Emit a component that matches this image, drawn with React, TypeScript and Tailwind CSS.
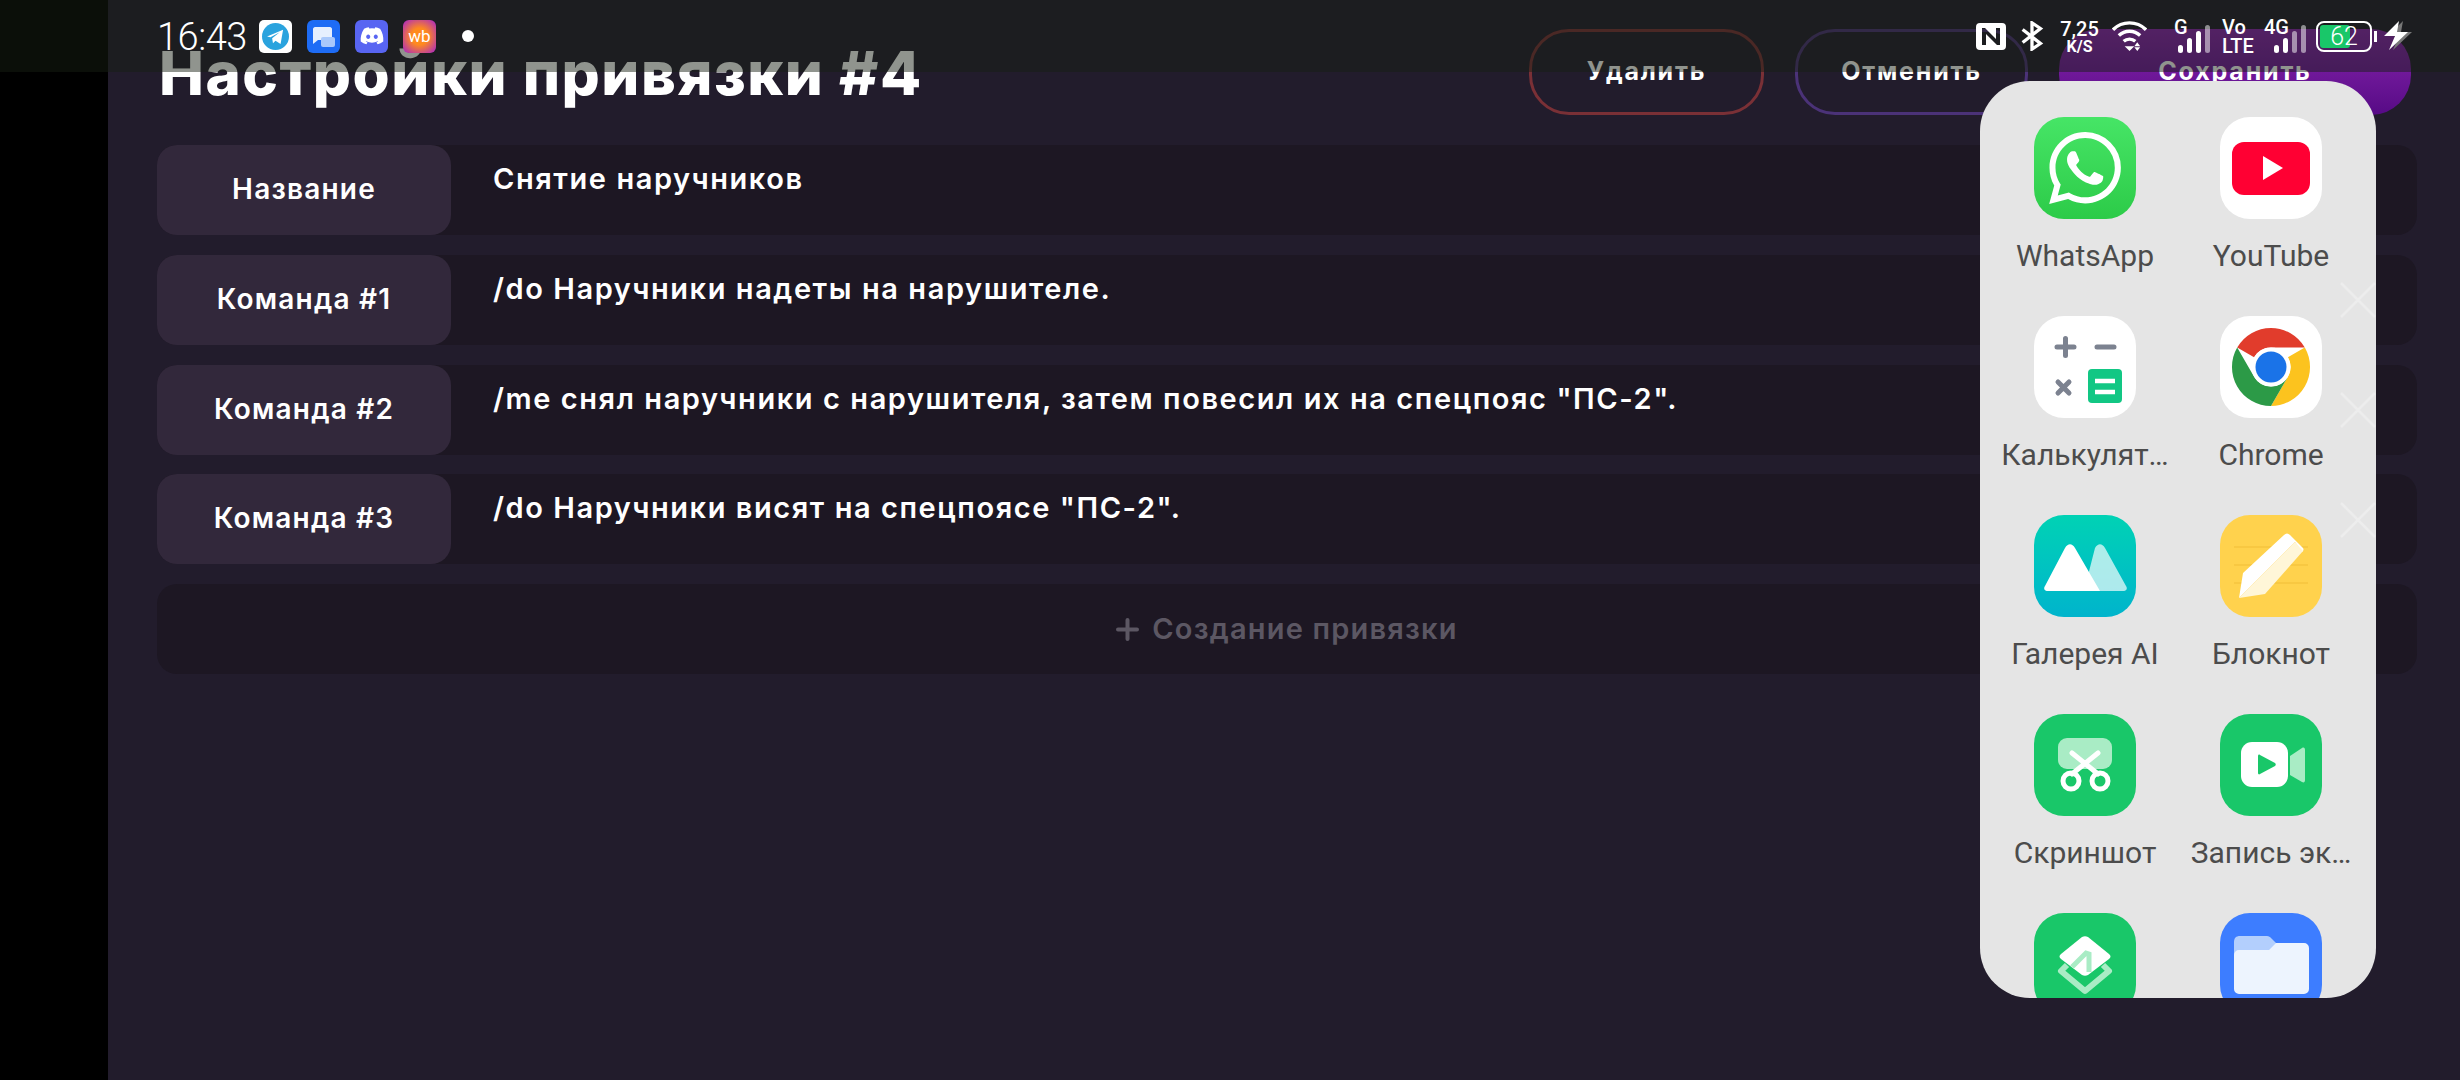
import React from 'react';

const rows = [
  { label: 'Название', value: 'Снятие наручников' },
  { label: 'Команда #1', value: '/do Наручники надеты на нарушителе.' },
  { label: 'Команда #2', value: '/me снял наручники с нарушителя, затем повесил их на спецпояс "ПС-2".' },
  { label: 'Команда #3', value: '/do Наручники висят на спецпоясе "ПС-2".' },
];

const WhatsAppIcon = () => (
  <div className="w-[102px] h-[102px] rounded-[30px] bg-gradient-to-b from-[#46e566] to-[#2ccb48] flex items-center justify-center">
    <svg viewBox="0 0 24 24" className="w-[72px] h-[72px]" fill="#fff">
      <path d="M17.47 14.38c-.3-.15-1.76-.87-2.03-.97-.27-.1-.47-.15-.67.15-.2.3-.77.97-.94 1.16-.17.2-.35.22-.64.08-.3-.15-1.26-.46-2.39-1.48-.88-.79-1.48-1.76-1.65-2.06-.17-.3-.02-.46.13-.6.13-.13.3-.35.45-.52.15-.17.2-.3.3-.5.1-.2.05-.37-.03-.52-.07-.15-.67-1.61-.92-2.2-.24-.58-.49-.5-.67-.51h-.57c-.2 0-.52.07-.79.37-.27.3-1.04 1.02-1.04 2.48s1.07 2.88 1.21 3.07c.15.2 2.1 3.2 5.08 4.49.71.3 1.26.49 1.69.62.71.23 1.36.2 1.87.12.57-.08 1.76-.72 2-1.41.25-.7.25-1.29.18-1.41-.07-.13-.27-.2-.57-.35zM12.05 21.79h-.01a9.87 9.87 0 0 1-5.03-1.38l-.36-.21-3.74.98 1-3.65-.24-.37a9.86 9.86 0 0 1-1.51-5.26c0-5.45 4.44-9.88 9.89-9.88 2.64 0 5.12 1.03 6.99 2.9a9.83 9.83 0 0 1 2.89 6.99c0 5.45-4.44 9.88-9.89 9.88zM20.46 3.49A11.82 11.82 0 0 0 12.05 0C5.5 0 .16 5.34.16 11.89c0 2.1.55 4.14 1.59 5.95L.06 24l6.31-1.65a11.88 11.88 0 0 0 5.68 1.45h.01c6.55 0 11.89-5.34 11.89-11.89a11.82 11.82 0 0 0-3.48-8.41z" />
    </svg>
  </div>
);

const YouTubeIcon = () => (
  <div className="w-[102px] h-[102px] rounded-[30px] bg-white flex items-center justify-center">
    <div className="w-[78px] h-[53px] rounded-[12px] bg-[#ff0033] flex items-center justify-center pl-[3px]">
      <svg viewBox="0 0 20 24" className="w-[20px] h-[24px]" fill="#fff"><path d="M0 0l20 12L0 24z" /></svg>
    </div>
  </div>
);

const CalculatorIcon = () => (
  <div className="w-[102px] h-[102px] rounded-[30px] bg-white">
    <svg viewBox="0 0 102 102" className="w-full h-full">
      <g stroke="#7c8290" strokeWidth="5" strokeLinecap="round">
        <path d="M23 31h17M31.5 22.5v17M63 31h17M24 66l11 11M35 66L24 77" />
      </g>
      <rect x="54" y="53" width="34" height="34" rx="4" fill="#12c784" />
      <path d="M61 65h20M61 76h20" stroke="#fff" strokeWidth="4.5" />
    </svg>
  </div>
);

const ChromeIcon = () => (
  <div className="w-[102px] h-[102px] rounded-[30px] bg-white">
    <svg viewBox="0 0 102 102" className="w-full h-full">
      <path d="M51 12a39 39 0 0 1 33.8 19.5H51A19.5 19.5 0 0 0 34.1 41.3L17.2 31.5A39 39 0 0 1 51 12z" fill="#e13c2c" />
      <path d="M84.8 31.5A39 39 0 0 1 51 90l16.9-29.3a19.5 19.5 0 0 0 0-19.5z" fill="#fcc31e" />
      <path d="M51 90a39 39 0 0 1-33.8-58.5l16.9 29.2A19.5 19.5 0 0 0 67.9 60.7z" fill="#2c9a47" />
      <circle cx="51" cy="51" r="19.5" fill="#fff" />
      <circle cx="51" cy="51" r="15.5" fill="#1a73e8" />
    </svg>
  </div>
);

const GalleryIcon = () => (
  <div className="w-[102px] h-[102px] rounded-[30px] bg-gradient-to-b from-[#00d2b4] to-[#00b4cc]">
    <svg viewBox="0 0 102 102" className="w-full h-full">
      <path d="M61 33c3-5 7-5 10 0l21 38c2 3 0 5-3 5H50z" fill="#fff" fillOpacity="0.68" />
      <path d="M31 33c3-5 7-5 10 0l25 43H14c-3 0-5-2-3-5z" fill="#fff" />
    </svg>
  </div>
);

const NotesIcon = () => (
  <div className="w-[102px] h-[102px] rounded-[30px] bg-[#ffd24d]">
    <svg viewBox="0 0 102 102" className="w-full h-full">
      <path d="M14 32h74M14 50h74M14 68h74" stroke="#f6c53f" strokeWidth="1.5" />
      <path d="M64 20c2-2 4-2 6 0l12 12c2 2 2 3 0 5L75 27 19 83l4-25z" fill="#fff" />
      <path d="M75 27l8 9-38 43-26 4z" fill="#fff6d8" />
    </svg>
  </div>
);

const ScreenshotIcon = () => (
  <div className="w-[102px] h-[102px] rounded-[30px] bg-[#19c769]">
    <svg viewBox="0 0 102 102" className="w-full h-full">
      <rect x="24" y="24" width="54" height="31" rx="9" fill="#a9ecc5" />
      <g stroke="#fff" strokeWidth="5" fill="none" strokeLinecap="round">
        <path d="M38 39l26 21M64 39L38 60" />
        <circle cx="37" cy="67" r="8" />
        <circle cx="66" cy="67" r="8" />
      </g>
    </svg>
  </div>
);

const RecorderIcon = () => (
  <div className="w-[102px] h-[102px] rounded-[30px] bg-[#19c769]">
    <svg viewBox="0 0 102 102" className="w-full h-full">
      <path d="M70 42l12-8c2-1 3 0 3 2v30c0 2-1 3-3 2l-12-7z" fill="#a9ecc5" />
      <rect x="21" y="28" width="47" height="45" rx="11" fill="#fff" />
      <path d="M38 42c0-1 1-2 2-1l15 8c1 1 1 2 0 3l-15 8c-1 1-2 0-2-1z" fill="#19c769" />
    </svg>
  </div>
);

const CleanerIcon = () => (
  <div className="w-[102px] h-[102px] rounded-[30px] bg-[#19c769]">
    <svg viewBox="0 0 102 102" className="w-full h-full">
      <path d="M33 52l-6 6 24 20 24-20-6-6" fill="none" stroke="#a9ecc5" strokeWidth="6" strokeLinejoin="round" />
      <path d="M48 24c2-1 4-1 6 0l21 17c2 2 2 3 0 5L54 62c-2 1-4 1-6 0L27 46c-2-2-2-3 0-5z" fill="#fff" />
      <path d="M38 54l14-14 3 1v18" fill="none" stroke="#a9ecc5" strokeWidth="5" />
    </svg>
  </div>
);

const FilesIcon = () => (
  <div className="w-[102px] h-[102px] rounded-[30px] bg-[#3d7dff]">
    <svg viewBox="0 0 102 102" className="w-full h-full">
      <path d="M14 29c0-4 2-6 6-6h27c2 0 3 1 4 2l5 5v15H14z" fill="#b3cffd" />
      <path d="M19 37h30l7-7h28a5 5 0 0 1 5 5v41a5 5 0 0 1-5 5H19a5 5 0 0 1-5-5V42a5 5 0 0 1 5-5z" fill="#edf4fe" />
    </svg>
  </div>
);

const apps = [
  { name: 'WhatsApp', Icon: WhatsAppIcon },
  { name: 'YouTube', Icon: YouTubeIcon },
  { name: 'Калькулят…', Icon: CalculatorIcon },
  { name: 'Chrome', Icon: ChromeIcon },
  { name: 'Галерея AI', Icon: GalleryIcon },
  { name: 'Блокнот', Icon: NotesIcon },
  { name: 'Скриншот', Icon: ScreenshotIcon },
  { name: 'Запись эк…', Icon: RecorderIcon },
  { name: '', Icon: CleanerIcon },
  { name: '', Icon: FilesIcon },
];

const SignalBars: React.FC<{ lit: number }> = ({ lit }) => (
  <div className="absolute right-0 bottom-0 flex items-end gap-[4px]">
    {[8, 15, 22, 28].map((h, i) => (
      <div
        key={h}
        className={i < lit ? 'w-[5px] bg-white rounded-full' : 'w-[5px] bg-white/50 rounded-full'}
        style={{ height: h }}
      />
    ))}
  </div>
);

const StatusBar = () => (
  <div className="absolute top-0 left-0 right-0 h-[72px] bg-[#162012]/[.48] text-white font-['Roboto',sans-serif]">
    <div className="flex items-center h-full pl-[157px] pr-[48px]">
      <span className="text-[38px] font-light tracking-[-0.5px] w-[102px] leading-none pt-[2px]">16:43</span>
      <div className="flex items-center gap-[15px]">
        <div className="w-[33px] h-[33px] rounded-[5px] bg-white flex items-center justify-center">
          <svg viewBox="0 0 32 32" className="w-[27px] h-[27px]">
            <circle cx="16" cy="16" r="16" fill="#2aa3de" />
            <path d="M6 16l19-8-3 17-6-4-3 3-1-6 9-7-11 6z" fill="#fff" />
          </svg>
        </div>
        <div className="w-[33px] h-[33px] rounded-[6px] bg-[#1e6cf5]">
          <svg viewBox="0 0 33 33" className="w-full h-full">
            <path d="M6 9c0-1 1-2 2-2h15c1 0 2 1 2 2v11H11l-5 4z" fill="#e6effe" />
            <rect x="14" y="17" width="14" height="10" rx="2" fill="#a9c8fb" />
          </svg>
        </div>
        <div className="w-[33px] h-[33px] rounded-[6px] bg-[#5865f2] flex items-center justify-center">
          <svg viewBox="0 0 24 24" className="w-[26px] h-[26px]" fill="#fff">
            <path d="M19.3 5.3A17 17 0 0 0 15 4l-.5 1a15 15 0 0 0-5 0L9 4a17 17 0 0 0-4.3 1.3C2 9.3 1.3 13.2 1.6 17a17 17 0 0 0 5.2 2.7l1.1-1.8-1.7-.8.4-.3a12 12 0 0 0 10.8 0l.4.3-1.7.8 1.1 1.8a17 17 0 0 0 5.2-2.7c.4-4.4-.7-8.2-2.9-11.7zM8.5 14.7c-1 0-1.9-1-1.9-2.1s.8-2.1 1.9-2.1 1.9 1 1.9 2.1-.8 2.1-1.9 2.1zm7 0c-1 0-1.9-1-1.9-2.1s.8-2.1 1.9-2.1 1.9 1 1.9 2.1-.8 2.1-1.9 2.1z" />
          </svg>
        </div>
        <div className="w-[33px] h-[33px] rounded-[6px] bg-[radial-gradient(circle,#ff8a1e_35%,#a621cf_100%)] flex items-center justify-center text-[17px] leading-none">wb</div>
      </div>
      <div className="w-[12px] h-[12px] rounded-full bg-white ml-[26px]" />
      <div className="ml-auto flex items-center">
        <svg viewBox="0 0 30 27" className="w-[30px] h-[27px]">
          <path fillRule="evenodd" d="M4 0h22a4 4 0 0 1 4 4v19a4 4 0 0 1-4 4H4a4 4 0 0 1-4-4V4a4 4 0 0 1 4-4zm2 5v17h4V11l11 11h3V5h-4v11L9 5z" fill="#fff" />
        </svg>
        <svg viewBox="0 0 24 32" className="w-[24px] h-[30px] ml-[14px]" fill="none" stroke="#fff" strokeWidth="3.5">
          <path d="M2 9l19 15-9 6V2l9 6L2 23" />
        </svg>
        <div className="ml-[17px] flex flex-col items-center w-[37px] pt-[1px]">
          <span className="text-[20px] leading-[20px] font-medium">7,25</span>
          <span className="text-[16px] leading-[16px] font-bold">K/S</span>
        </div>
        <svg viewBox="0 0 36 32" className="w-[35px] h-[31px] ml-[14px]" fill="none" stroke="#fff" strokeWidth="3.5">
          <path d="M1 9a24 24 0 0 1 34 0M7 15a16 16 0 0 1 22 0M12 21a9 9 0 0 1 12 0" />
          <path d="M13 26h10l-5 5zM26 22l-3 4h6zM23 27h6l-3 4z" fill="#fff" stroke="none" />
        </svg>
        <div className="ml-[27px] relative w-[36px] h-[34px]">
          <span className="absolute left-0 top-[-2px] text-[20px] leading-none font-medium">G</span>
          <SignalBars lit={3} />
        </div>
        <div className="ml-[12px] flex flex-col items-start w-[29px] pt-[1px]">
          <span className="text-[20px] leading-[19px] font-medium">Vo</span>
          <span className="text-[20px] leading-[19px] font-medium">LTE</span>
        </div>
        <div className="ml-[13px] relative w-[42px] h-[34px]">
          <span className="absolute left-0 top-[-2px] text-[20px] leading-none font-medium">4G</span>
          <SignalBars lit={2} />
        </div>
        <div className="ml-[10px] relative w-[56px] h-[31px] rounded-[8px] border-2 border-white p-[2px]">
          <div className="h-full w-[30px] rounded-[3px] bg-[#19c769]" />
          <span className="absolute inset-0 flex items-center justify-center text-[25px] font-light leading-none">62</span>
        </div>
        <div className="w-[3px] h-[11px] bg-white ml-[2px]" />
        <svg viewBox="0 0 28 30" className="w-[28px] h-[30px] ml-[7px]">
          <path d="M19 0L4 15h11L9 29l19-18H17z" fill="#777" />
          <path d="M15 0L0 15h11L5 29l19-18H13z" fill="#fff" />
        </svg>
      </div>
    </div>
  </div>
);

const closeMarks = ['top-[201px]', 'top-[311px]', 'top-[421px]'];

const AppPanel = () => (
  <div className="absolute left-[1980px] top-[81px] w-[396px] h-[917px] rounded-[50px] bg-[#e5e5e5] overflow-hidden">
    <div className="grid grid-cols-[186px_186px] justify-center pt-[36px] font-['Roboto',sans-serif]">
      {apps.map(({ name, Icon }, i) => (
        <div key={i} className="flex flex-col items-center h-[199px]">
          <Icon />
          <span className="mt-[17px] text-[30px] leading-[40px] text-[#4c4c4c] whitespace-nowrap">{name}</span>
        </div>
      ))}
    </div>
    {closeMarks.map(top => (
      <svg key={top} viewBox="0 0 36 36" className={`absolute left-[360px] w-[36px] h-[36px] ${top}`} stroke="#fff" strokeOpacity="0.3" strokeWidth="2.5">
        <path d="M1 1l34 34M35 1L1 35" />
      </svg>
    ))}
  </div>
);

const Row: React.FC<{ label: string; value: string }> = ({ label, value }) => (
  <div className="h-[90px] rounded-[20px] bg-[#1d1723] flex">
    <div className="w-[294px] h-full rounded-[20px] bg-[#32283b] flex items-center justify-center pb-[2px] text-[28px] font-semibold text-white tracking-[1.2px]">
      {label}
    </div>
    <div className="pl-[42px] pt-[12px] text-[29px] font-semibold text-white tracking-[1.56px]">{value}</div>
  </div>
);

export default function App() {
  return (
    <div className="relative w-[2460px] h-[1080px] overflow-hidden bg-[#221c2c] flex font-['Inter',sans-serif]">
      <div className="w-[108px] h-full bg-black shrink-0" />
      <div className="flex-1 pl-[49px] pr-[43px] pt-[29px]">
        <div className="flex items-center justify-between h-[86px] pr-[6px]">
          <h1 className="text-[60px] font-extrabold text-white leading-none pl-[2px] pt-[2px] tracking-[1.5px]">Настройки привязки #4</h1>
          <div className="flex gap-[31px] text-[25px] font-bold text-white tracking-[1.8px]">
            <button className="w-[235px] h-[86px] rounded-[40px] border-[3px] border-[#7a3036]">Удалить</button>
            <button className="w-[233px] h-[86px] rounded-[40px] border-[3px] border-[#4b3278]">Отменить</button>
            <button className="w-[352px] h-[86px] rounded-[40px] bg-gradient-to-b from-[#8a24ae] to-[#570a86]">Сохранить</button>
          </div>
        </div>
        <div className="mt-[30px] flex flex-col gap-[19.75px]">
          {rows.map(r => (
            <Row key={r.label} label={r.label} value={r.value} />
          ))}
          <div className="h-[90px] rounded-[20px] bg-[#1d1723] flex items-center justify-center gap-[13px] text-[29px] font-semibold text-[#5c5763] tracking-[1.2px]">
            <svg viewBox="0 0 23 23" className="w-[23px] h-[23px]" stroke="#5c5763" strokeWidth="4" strokeLinecap="round">
              <path d="M2 11.5h19M11.5 2v19" />
            </svg>
            <span>Создание привязки</span>
          </div>
        </div>
      </div>
      <AppPanel />
      <StatusBar />
    </div>
  );
}
